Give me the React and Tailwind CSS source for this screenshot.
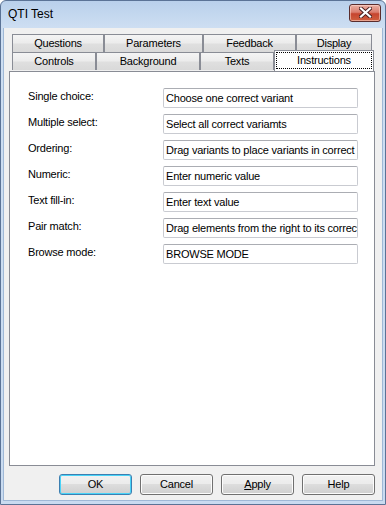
import React from "react";

const tabBg =
  "bg-[linear-gradient(to_bottom,#f4f4f4_0%,#ececec_45%,#dfdfdf_55%,#d9d9d9_100%)]";

function Tab({ w, children }) {
  return (
    <div
      className={`h-[18px] shrink-0 border border-b-0 border-[#898c95] ${tabBg} flex items-center justify-center text-[11px] leading-[13px] text-black`}
      style={{ width: w }}
    >
      {children}
    </div>
  );
}

function Row({ label, value }) {
  return (
    <div className="flex h-[20px] items-start">
      <div className="w-[135px] shrink-0 mt-[1px] text-[11px] leading-[14px] text-black">{label}</div>
      <div className="w-[195px] h-[20px] shrink-0 overflow-hidden whitespace-nowrap rounded-[2px] border border-[#c9cbd1] border-t-[#abadb3] bg-white pl-[2px] pt-[2px] text-[11px] leading-[14px] text-black">
        {value}
      </div>
    </div>
  );
}

function Button({ children, def }) {
  return (
    <div
      className={`w-[73px] h-[21px] rounded-[3px] border flex items-center justify-center text-[11px] text-black bg-[linear-gradient(to_bottom,#f2f2f2_0%,#ebebeb_50%,#dddddd_50%,#cfcfcf_100%)] ${
        def
          ? "border-[#3c7fb1] shadow-[inset_0_0_0_1px_#48d3f8]"
          : "border-[#707070] shadow-[inset_0_0_0_1px_#fcfcfc]"
      }`}
    >
      {children}
    </div>
  );
}

export default function App() {
  return (
    <div
      className="w-[386px] h-[505px] flex flex-col border border-[#5b7396] rounded-t-[6px] bg-[linear-gradient(to_bottom,#b9d0eb_0px,#cddef2_26px,#c9dbf0_100%)] overflow-hidden tracking-[-0.2px]"
      style={{ fontFamily: '"Liberation Sans", Arial, sans-serif' }}
    >
      {/* Title bar */}
      <div className="h-[27px] shrink-0 flex items-center justify-between pl-[7px] pr-[4px]">
        <div className="text-[12px] text-black leading-[14px] mt-[-2px] tracking-normal">QTI Test</div>
        <div className="w-[32px] h-[18px] mt-[-4px] rounded-[3px] border border-[#5a2d2d] bg-[linear-gradient(to_bottom,#eab0a3_0%,#db7e6f_45%,#c6452f_55%,#d0603f_100%)] flex items-center justify-center shadow-[inset_0_0_0_1px_rgba(255,220,210,0.55)]">
          <svg width="13" height="11" viewBox="0 0 13 11">
            <path d="M2 1.5 L11 9.5 M11 1.5 L2 9.5" stroke="#4a1f1f" strokeWidth="4" strokeLinecap="square" />
            <path d="M2 1.5 L11 9.5 M11 1.5 L2 9.5" stroke="#ffffff" strokeWidth="2.2" strokeLinecap="square" />
          </svg>
        </div>
      </div>

      {/* Client area */}
      <div className="flex-1 mx-[2px] mb-[3px] border border-t-0 border-[#9fb8d6] bg-[#f0f0f0] flex flex-col pt-[6px] pl-[5px] pr-[7px]">
        {/* Tabs */}
        <div className="pl-[3px] flex flex-col">
          <div className="flex">
            <Tab w={92}>Questions</Tab>
            <Tab w={99}>Parameters</Tab>
            <Tab w={93}>Feedback</Tab>
            <Tab w={76}>Display</Tab>
          </div>
          <div className="flex">
            <Tab w={84}>Controls</Tab>
            <Tab w={104}>Background</Tab>
            <Tab w={74}>Texts</Tab>
            <div className="relative z-10 w-[100px] h-[21px] mt-[-2px] shrink-0 border border-b-0 border-[#898c95] bg-white p-[1px] pb-[2px]">
              <div className="h-full w-full border border-dotted border-black flex items-start justify-center text-[11px] leading-[13px] text-black pt-[1px]">
                Instructions
              </div>
            </div>
          </div>
        </div>

        {/* Panel */}
        <div className="h-[395px] w-[366px] border border-[#898c95] bg-white pt-[16px] pl-[18px] flex flex-col gap-[6px]">
          <Row label="Single choice:" value="Choose one correct variant" />
          <Row label="Multiple select:" value="Select all correct variamts" />
          <Row label="Ordering:" value="Drag variants to place variants in correct order" />
          <Row label="Numeric:" value="Enter numeric value" />
          <Row label="Text fill-in:" value="Enter text value" />
          <Row label="Pair match:" value="Drag elements from the right to its correct pair" />
          <Row label="Browse mode:" value="BROWSE MODE" />
        </div>

        {/* Buttons */}
        <div className="mt-[8px] flex justify-end gap-[8px] w-[366px]">
          <Button def>OK</Button>
          <Button>Cancel</Button>
          <Button>
            <span>
              <span className="underline">A</span>pply
            </span>
          </Button>
          <Button>Help</Button>
        </div>
      </div>
    </div>
  );
}
